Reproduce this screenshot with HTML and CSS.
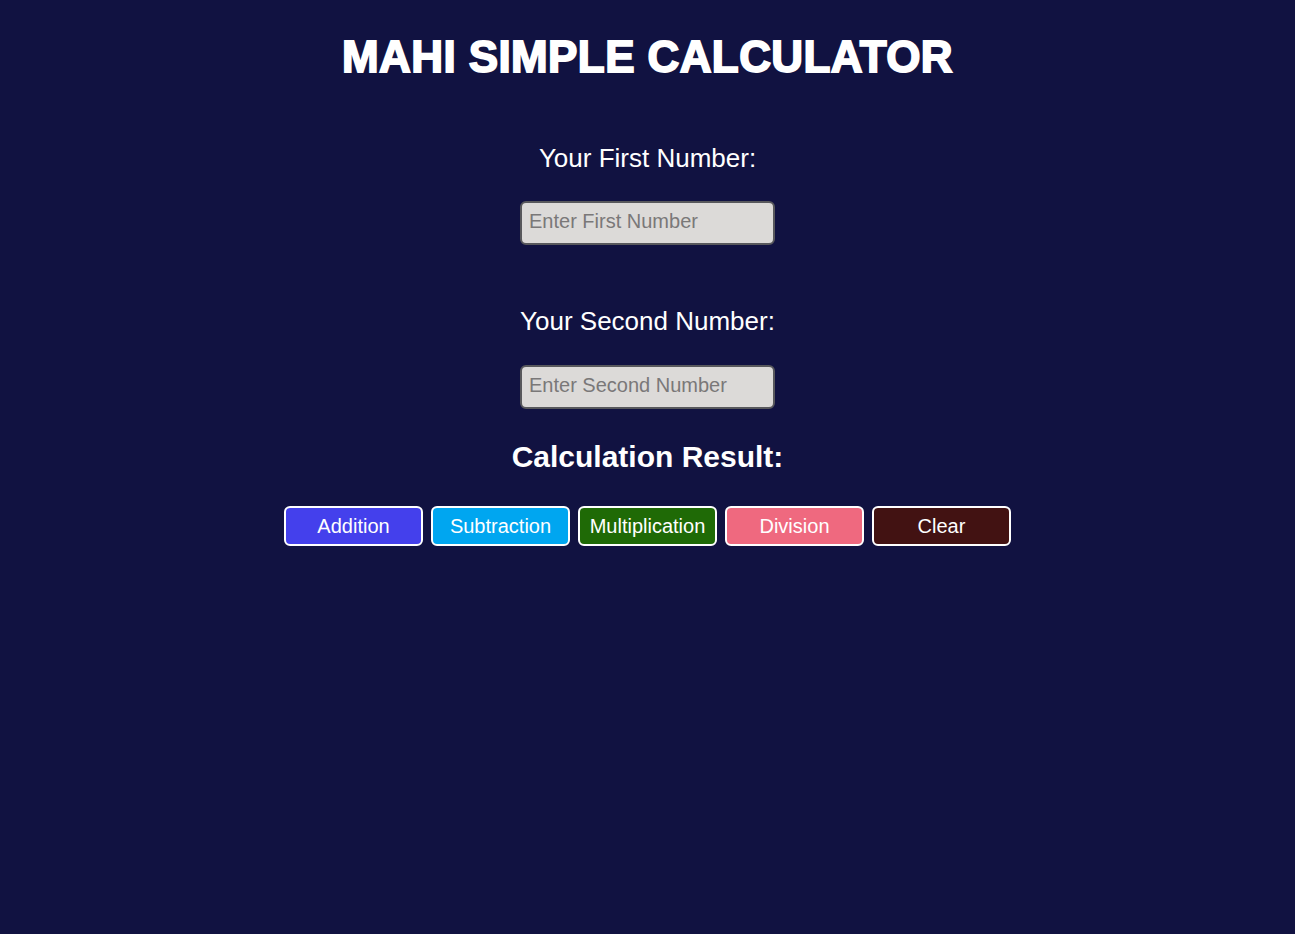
FILE: index.html
```html
<!DOCTYPE html>
<html lang="en">
<head>
<meta charset="utf-8">
<title>Mahi Simple Calculator</title>
<link rel="stylesheet" href="styles.css">
</head>
<body>
<main class="calc">
  <h1 class="title">MAHI SIMPLE CALCULATOR</h1>
  <label class="label label-first" for="n1">Your First Number:</label>
  <input class="field" id="n1" type="text" placeholder="Enter First Number">
  <label class="label label-second" for="n2">Your Second Number:</label>
  <input class="field" id="n2" type="text" placeholder="Enter Second Number">
  <h2 class="result">Calculation Result:</h2>
  <div class="buttons">
    <button class="btn btn-add">Addition</button>
    <button class="btn btn-sub">Subtraction</button>
    <button class="btn btn-mul">Multiplication</button>
    <button class="btn btn-div">Division</button>
    <button class="btn btn-clear">Clear</button>
  </div>
</main>
</body>
</html>
```
FILE: styles.css
```css
html, body {
  margin: 0;
  padding: 0;
  background: #111241;
  min-height: 100%;
}
body {
  font-family: "Liberation Sans", Arial, sans-serif;
  color: #ffffff;
}
.calc {
  display: flex;
  flex-direction: column;
  align-items: center;
  padding-top: 32px;
}
.title {
  margin: 0;
  font-size: 44px;
  line-height: 50px;
  font-weight: 900;
  -webkit-text-stroke: 1.8px #ffffff;
  letter-spacing: 0.4px;
}
.label {
  display: block;
  font-size: 26px;
  line-height: 28px;
}
.label-first { margin-top: 62px; }
.label-second { margin-top: 62px; }
.field {
  margin-top: 29px;
  box-sizing: border-box;
  width: 255px;
  height: 44px;
  padding: 0 7px 3px;
  background: #dcdad8;
  border: 2px solid #58585c;
  border-radius: 6px;
  font-family: "Liberation Sans", Arial, sans-serif;
  font-size: 20px;
  color: #222;
  outline: none;
}
.field::placeholder { color: #7a7878; }
.label-second + .field { margin-top: 30px; }
.result {
  margin: 32px 0 0;
  font-size: 30px;
  line-height: 32px;
  font-weight: 700;
}
.buttons {
  margin-top: 33px;
  display: flex;
  gap: 8px;
}
.btn {
  box-sizing: border-box;
  width: 139px;
  height: 40px;
  border: 2px solid #ffffff;
  border-radius: 6px;
  color: #ffffff;
  font-family: "Liberation Sans", Arial, sans-serif;
  font-size: 20px;
  padding: 0;
}
.btn-add { background: #4440ec; }
.btn-sub { background: #00a6f0; }
.btn-mul { background: #1f6a06; }
.btn-div { background: #ef697f; }
.btn-clear { background: #421212; }
```
